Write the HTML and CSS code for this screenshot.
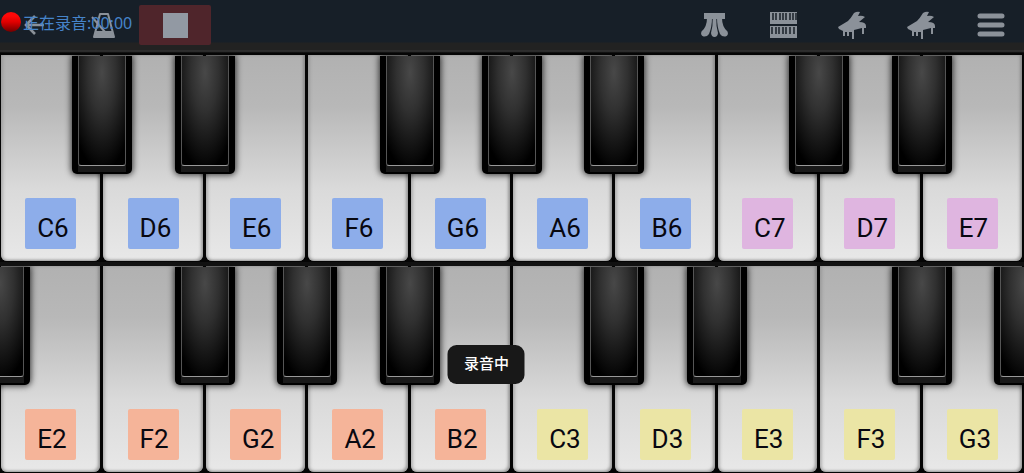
FILE: index.html
```html
<!DOCTYPE html>
<html lang="zh-CN">
<head>
<meta charset="utf-8">
<meta name="viewport" content="width=device-width, initial-scale=1">
<title>钢琴</title>
<link rel="stylesheet" href="styles.css">
</head>
<body>
<header class="toolbar">
  <div class="group">
    <button class="tool" aria-label="返回"><svg class="icon" viewBox="0 0 30 30"><path d="M24 15H8M15 6L6 15L15 24" fill="none" stroke="currentColor" stroke-width="2.600"/></svg></button>
    <button class="tool" aria-label="节拍器"><svg class="icon" viewBox="0 0 30 30"><path d="M11 4H19L25 27H5Z" fill="none" stroke="currentColor" stroke-width="2" stroke-linejoin="round"/><path d="M7 21H23L25 27H5Z" fill="currentColor"/><path d="M3 7L16 22" stroke="currentColor" stroke-width="2"/></svg></button>
    <button class="tool stop" aria-label="停止录音"><span class="stop-mark"></span></button>
  </div>
  <div class="group actions">
    <button class="tool" aria-label="踏板"><svg class="icon" viewBox="0 0 30 30"><g fill="currentColor"><path d="M5 3H26V9H5Z"/><path d="M8 8H13Q13 17 10 24Q8 27 4.500 26.500Q1 25 2.500 21.500Q8 17 8 8Z"/><path d="M13.700 8H17.300Q17 16 19 23Q18.500 27 15.500 27Q12.500 27 12 23Q14 16 13.700 8Z"/><path d="M18 8H23Q23 17 28.500 21.500Q30 25 26.500 26.500Q23 27 21 24Q18 17 18 8Z"/></g></svg></button>
    <button class="tool" aria-label="双排键盘"><svg class="icon" viewBox="0 0 30 30"><path d="M2 2H29V14H2ZM2 16H29V28H2Z" fill="currentColor"/><path d="M5 3V10M8 3V10M12 3V10M15 3V10M18 3V10M22 3V10M25 3V10M28 3V10M4 17V24M8 17V24M11 17V24M15 17V24M18 17V24M22 17V24M26 17V24" stroke="#20272f" stroke-width="1.600"/></svg></button>
    <button class="tool" aria-label="钢琴一"><svg class="icon" viewBox="0 0 30 30"><path d="M1 17L11 11Q14 8 17 3Q20 1 23 2L21 6Q25 5 28 7L22 12Q29 12 29 16V18H27V24H25V18L17 20V29H15V22H12V26H10V22H8V26H6V21L2 19Z" fill="currentColor"/></svg></button>
    <button class="tool" aria-label="钢琴二"><svg class="icon" viewBox="0 0 30 30"><path d="M1 17L11 11Q14 8 17 3Q20 1 23 2L21 6Q25 5 28 7L22 12Q29 12 29 16V18H27V24H25V18L17 20V29H15V22H12V26H10V22H8V26H6V21L2 19Z" fill="currentColor"/></svg></button>
    <button class="tool" aria-label="菜单"><svg class="icon" viewBox="0 0 30 30"><path d="M5 6H27M5 15H27M5 24H27" stroke="currentColor" stroke-width="5" stroke-linecap="round"/></svg></button>
  </div>
  <div class="recording"><span class="dot"></span><span>正在录音:00:00</span></div>
</header>
<main class="piano">
  <ul class="keyboard">
    <li class="slot"><button class="white"><span class="note blue">C6</span></button><button class="black" aria-label="C#6"></button></li>
    <li class="slot"><button class="white"><span class="note blue">D6</span></button><button class="black" aria-label="D#6"></button></li>
    <li class="slot"><button class="white"><span class="note blue">E6</span></button></li>
    <li class="slot"><button class="white"><span class="note blue">F6</span></button><button class="black" aria-label="F#6"></button></li>
    <li class="slot"><button class="white"><span class="note blue">G6</span></button><button class="black" aria-label="G#6"></button></li>
    <li class="slot"><button class="white"><span class="note blue">A6</span></button><button class="black" aria-label="A#6"></button></li>
    <li class="slot"><button class="white"><span class="note blue">B6</span></button></li>
    <li class="slot"><button class="white"><span class="note pink">C7</span></button><button class="black" aria-label="C#7"></button></li>
    <li class="slot"><button class="white"><span class="note pink">D7</span></button><button class="black" aria-label="D#7"></button></li>
    <li class="slot"><button class="white"><span class="note pink">E7</span></button></li>
  </ul>
  <ul class="keyboard">
    <li class="slot"><button class="black before" aria-label="D#2"></button><button class="white"><span class="note orange">E2</span></button></li>
    <li class="slot"><button class="white"><span class="note orange">F2</span></button><button class="black" aria-label="F#2"></button></li>
    <li class="slot"><button class="white"><span class="note orange">G2</span></button><button class="black" aria-label="G#2"></button></li>
    <li class="slot"><button class="white"><span class="note orange">A2</span></button><button class="black" aria-label="A#2"></button></li>
    <li class="slot"><button class="white"><span class="note orange">B2</span></button></li>
    <li class="slot"><button class="white"><span class="note yellow">C3</span></button><button class="black" aria-label="C#3"></button></li>
    <li class="slot"><button class="white"><span class="note yellow">D3</span></button><button class="black" aria-label="D#3"></button></li>
    <li class="slot"><button class="white"><span class="note yellow">E3</span></button></li>
    <li class="slot"><button class="white"><span class="note yellow">F3</span></button><button class="black" aria-label="F#3"></button></li>
    <li class="slot"><button class="white"><span class="note yellow">G3</span></button><button class="black" aria-label="G#3"></button></li>
  </ul>
</main>
<div class="toast" role="status">录音中</div>
</body>
</html>
```
FILE: styles.css
```css
* { box-sizing: border-box; }

body {
  display: flex;
  flex-direction: column;
  height: 100vh;
  margin: 0;
  overflow: hidden;
  background: #000;
  font-family: Roboto, "Noto Sans CJK SC", sans-serif;
}

button {
  padding: 0;
  border: 0;
  font: inherit;
}

.toolbar {
  position: relative;
  display: flex;
  justify-content: space-between;
  height: 55px;
  padding-top: 5px;
  background: linear-gradient(#171f28 42px, #222 43px, #222 50px, #383838 51px, #050505 53px);
}

.group { display: flex; }

.tool {
  display: grid;
  place-items: center;
  width: 69px;
  height: 40px;
  background: none;
  color: #8b9199;
}

.icon {
  width: 30px;
  height: 30px;
}

.stop {
  width: 72px;
  margin-left: 1px;
  border-radius: 2px;
  background: #4f252b;
}

.stop-mark {
  width: 25px;
  height: 25px;
  background: #9299a3;
}

.recording {
  position: absolute;
  top: 11px;
  left: 1px;
  display: flex;
  align-items: center;
  gap: 2px;
  height: 21px;
  color: #4684ca;
  font-family: "Noto Sans", "Noto Sans CJK SC", sans-serif;
  font-size: 16px;
}

.dot {
  width: 20px;
  height: 20px;
  border-radius: 50%;
  background: linear-gradient(#ff0808 20%, #e00000 50%, #700000);
}

.piano {
  display: flex;
  flex: 1;
  flex-direction: column;
  gap: 4px;
  background: linear-gradient(#000, #222);
}

.keyboard {
  display: grid;
  flex: 1;
  grid-template-columns: repeat(10, 1fr);
  margin: 0;
  padding: 0;
  overflow: hidden;
  background: #050505;
  list-style: none;
}

.slot {
  position: relative;
  display: flex;
  padding: 0 2px 1px 1px;
}

.white {
  display: flex;
  flex: 1;
  align-items: flex-end;
  justify-content: center;
  padding-bottom: 12px;
  border-radius: 0 0 6px 6px;
  background: linear-gradient(#b1b1b1, #b8b8b8 25%, #dadada 65%, #e8e8e8);
  box-shadow: inset 2px 0 3px #8888, inset -2px -1px 3px #777a;
}

.note {
  width: 51px;
  height: 51px;
  padding: 5px 0 0 12px;
  border-radius: 2px;
  color: #080810;
  font-size: 26px;
  line-height: 51px;
  text-align: left;
}

.blue { background: #8dadea; }
.pink { background: #dfb5e0; }
.orange { background: #f5b499; }
.yellow { background: #ebe5a5; }

.black {
  position: absolute;
  z-index: 1;
  top: 1px;
  left: 100%;
  width: 60px;
  height: 57%;
  border: solid #000;
  border-width: 0 6px 2px;
  border-radius: 0 0 5px 5px;
  background: #191919;
  box-shadow: 0 0 6px 1px #000b;
  transform: translateX(-50%);
}

.black::before {
  content: "";
  position: absolute;
  inset: 0 0 6px;
  border: 1px solid #777;
  border-top: 0;
  border-color: #444 #555 #999;
  border-radius: 0 0 3px 3px;
  background: radial-gradient(ellipse 75% 90% at 50% 15%, #484848, #303030 40%, #000);
}

.before { left: 0; }

.toast {
  position: fixed;
  z-index: 2;
  bottom: 89px;
  left: 47.5%;
  padding: 8px 16px;
  border-radius: 9px;
  background: #181818;
  color: #fff;
  font-size: 15px;
  font-weight: 500;
  line-height: 23px;
  transform: translateX(-50%);
}
```
